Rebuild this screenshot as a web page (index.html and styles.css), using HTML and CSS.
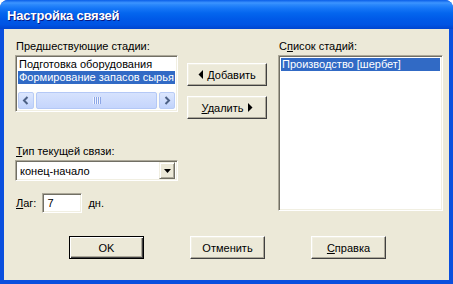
FILE: index.html
```html
<!DOCTYPE html>
<html lang="ru">
<head>
    <meta charset="UTF-8">
    <title>Настройка связей</title>
    <link rel="stylesheet" href="styles.css">
</head>
<body>
    <div class="window">
        <div class="titlebar">
            <span class="title">Настройка связей</span>
        </div>
        <div class="client">
            <div class="main">
                <div class="col-left">
                    <div class="label">Предшествующие стадии:</div>
                    <div class="field listbox prev-list">
                        <div class="items">
                            <div class="item">Подготовка оборудования</div>
                            <div class="item selected">Формирование запасов сырья</div>
                        </div>
                        <div class="hscroll">
                            <div class="sb-btn">
                                <svg width="8" height="9" viewBox="0 0 8 9"><path d="M5.5 1 L2 4.5 L5.5 8" fill="none" stroke="#4d6185" stroke-width="2"/></svg>
                            </div>
                            <div class="sb-track">
                                <div class="sb-thumb"><span class="grip"></span></div>
                            </div>
                            <div class="sb-btn">
                                <svg width="8" height="9" viewBox="0 0 8 9"><path d="M2.5 1 L6 4.5 L2.5 8" fill="none" stroke="#4d6185" stroke-width="2"/></svg>
                            </div>
                        </div>
                    </div>
                    <div class="label type-label"><u>Т</u>ип текущей связи:</div>
                    <div class="field combo">
                        <span class="combo-text">конец-начало</span>
                        <span class="combo-btn">
                            <svg width="7" height="4" viewBox="0 0 7 4"><path d="M0 0 H7 L3.5 4 Z" fill="#000"/></svg>
                        </span>
                    </div>
                    <div class="lag-row">
                        <span><u>Л</u>аг:</span>
                        <span class="field edit">7</span>
                        <span>дн.</span>
                    </div>
                </div>
                <div class="col-mid">
                    <button class="btn move-btn">
                        <svg width="5" height="9" viewBox="0 0 5 9"><path d="M5 0 V9 L0.5 4.5 Z" fill="#000"/></svg>
                        <span><u>Д</u>обавить</span>
                    </button>
                    <button class="btn move-btn">
                        <span><u>У</u>далить</span>
                        <svg width="5" height="9" viewBox="0 0 5 9"><path d="M0 0 V9 L4.5 4.5 Z" fill="#000"/></svg>
                    </button>
                </div>
                <div class="col-right">
                    <div class="label">С<u>п</u>исок стадий:</div>
                    <div class="field listbox stage-list">
                        <div class="items">
                            <div class="item selected">Производство [шербет]</div>
                        </div>
                    </div>
                </div>
            </div>
            <div class="footer">
                <button class="btn dlg-btn default">OK</button>
                <button class="btn dlg-btn">Отменить</button>
                <button class="btn dlg-btn"><u>С</u>правка</button>
            </div>
        </div>
    </div>
</body>
</html>
```

FILE: styles.css
```css
body {
    margin: 0;
    padding: 0;
    background: #fff;
}

.window {
    width: 453px;
    height: 284px;
    display: flex;
    flex-direction: column;
    background: #0a4fde;
    border-radius: 8px 8px 0 0;
    box-sizing: border-box;
    overflow: hidden;
    font-family: "Liberation Sans", Arial, sans-serif;
    font-size: 11px;
    color: #000;
}

.titlebar {
    height: 29px;
    flex: none;
    display: flex;
    align-items: center;
    padding-left: 7px;
    background: linear-gradient(to bottom, #0a5ee8 0%, #3d95ff 10%, #2b88fb 16%, #1677f7 28%, #0466ee 45%, #005ae8 65%, #0054e3 85%, #0045cf 100%);
}

.title {
    color: #fff;
    font-size: 13px;
    font-weight: bold;
    letter-spacing: -0.2px;
    text-shadow: 1px 1px #0a1883;
    margin-top: 2px;
}

.client {
    flex: 1;
    margin: 0 4px 4px 4px;
    background: #ece9d8;
    padding: 11px 0 0 11px;
    display: flex;
    flex-direction: column;
}

.main {
    display: flex;
}

.label {
    height: 13px;
    line-height: 13px;
    padding-left: 1px;
}

u {
    text-decoration: underline;
    text-underline-offset: 1px;
}

.field {
    box-sizing: border-box;
    background: #fff;
    border: 1px solid;
    border-color: #aca899 #fff #fff #aca899;
    box-shadow: inset 1px 1px #716f64, inset -1px -1px #f1efe2;
}

.col-left {
    width: 163px;
    display: flex;
    flex-direction: column;
}

.listbox {
    margin-top: 2px;
    padding: 2px;
    display: flex;
    flex-direction: column;
}

.prev-list {
    height: 57px;
    overflow: hidden;
}

.items {
    flex: 1;
    overflow: hidden;
}

.item {
    height: 13px;
    line-height: 13px;
    padding-left: 1px;
    white-space: nowrap;
}

.item.selected {
    background: #316ac5;
    color: #fff;
}

.hscroll {
    height: 17px;
    display: flex;
    background: #fbfbf8;
}

.sb-btn {
    width: 16px;
    box-sizing: border-box;
    border: 1px solid #b9ccf6;
    border-radius: 2px;
    background: linear-gradient(to bottom, #dde7fe, #c1d3fb);
    display: flex;
    align-items: center;
    justify-content: center;
}

.sb-track {
    flex: 1;
    padding: 0 2px;
    display: flex;
}

.sb-thumb {
    flex: 1;
    box-sizing: border-box;
    border: 1px solid #b4c8f6;
    border-radius: 2px;
    background: linear-gradient(to bottom, #d6e2fd, #c5d5fc);
    display: flex;
    align-items: center;
    justify-content: center;
}

.grip {
    width: 8px;
    height: 7px;
    background: repeating-linear-gradient(to right, #eef3ff 0, #eef3ff 1px, #8ca6e6 1px, #8ca6e6 2px);
}

.type-label {
    margin-top: 33px;
}

.combo {
    margin-top: 2px;
    height: 21px;
    display: flex;
    align-items: center;
    padding: 2px;
}

.combo-text {
    flex: 1;
    padding-left: 2px;
}

.combo-btn {
    width: 16px;
    height: 17px;
    box-sizing: border-box;
    background: #ece9d8;
    border: 1px solid;
    border-color: #f1efe2 #716f64 #716f64 #f1efe2;
    box-shadow: inset 1px 1px #fff, inset -1px -1px #aca899;
    display: flex;
    align-items: center;
    justify-content: center;
}

.lag-row {
    margin-top: 12px;
    display: flex;
    align-items: center;
    gap: 6px;
    padding-left: 1px;
}

.edit {
    width: 40px;
    height: 20px;
    line-height: 18px;
    padding-left: 4px;
}

.col-mid {
    width: 80px;
    margin-left: 9px;
    padding-top: 23px;
    display: flex;
    flex-direction: column;
    gap: 10px;
}

.btn {
    box-sizing: border-box;
    font-family: "Liberation Sans", Arial, sans-serif;
    font-size: 11px;
    font-weight: normal;
    color: #000;
    background: #ece9d8;
    border: 1px solid;
    border-color: #fff #404040 #404040 #fff;
    box-shadow: inset -1px -1px #aca899, inset 1px 1px #f1efe2;
    padding: 0;
    display: flex;
    align-items: center;
    justify-content: center;
}

.move-btn {
    height: 23px;
    gap: 4px;
}

.col-right {
    width: 165px;
    margin-left: 11px;
    display: flex;
    flex-direction: column;
}

.stage-list {
    height: 156px;
}

.footer {
    margin-top: 23px;
    padding-left: 54px;
    display: flex;
    gap: 46px;
}

.dlg-btn {
    width: 75px;
    height: 23px;
}

.dlg-btn.default {
    border-color: #000;
    box-shadow: inset 1px 1px #fff, inset -1px -1px #404040, inset -2px -2px #aca899;
}
```
